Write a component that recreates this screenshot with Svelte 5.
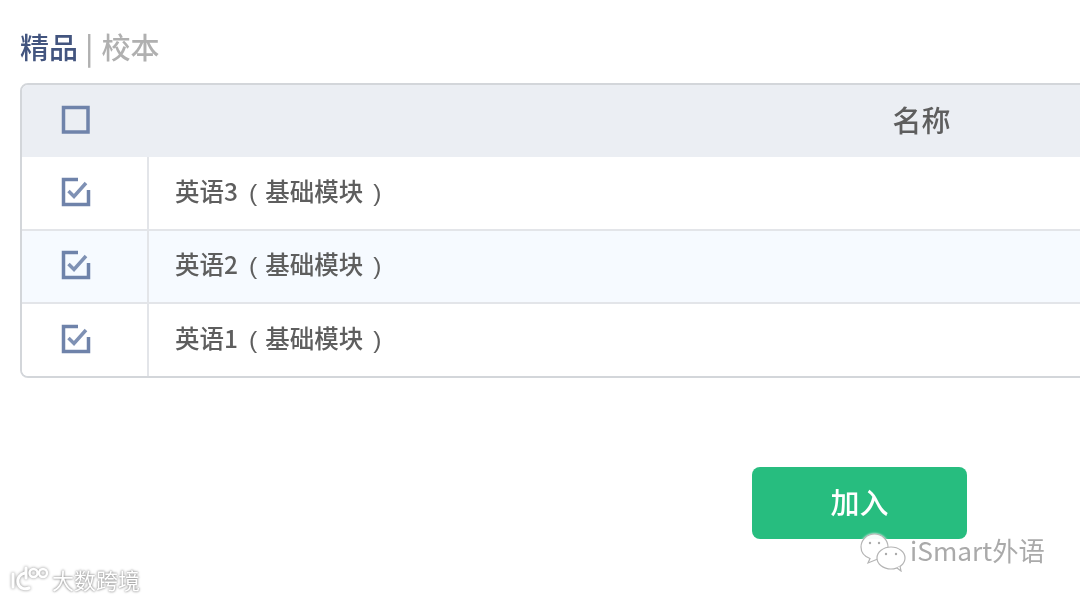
<script>
  const rows = [
    { label: '英语3', alt: false },
    { label: '英语2', alt: true },
    { label: '英语1', alt: false }
  ];
</script>

<div class="page">
  <div class="title"><span class="on">精品</span><span class="sep">|</span><span class="off">校本</span></div>

  <div class="table">
    <div class="row head">
      <div class="cell check">
        <svg width="30" height="30" viewBox="0 0 30 30"><rect x="2.500" y="2.500" width="24.500" height="24.500" fill="none" stroke="#6f83aa" stroke-width="3.500"/></svg>
      </div>
      <div class="cell name headname"><span>名称</span></div>
    </div>
    {#each rows as r, i}
      <div class="row" class:alt={r.alt} class:last={i === rows.length - 1}>
        <div class="cell check bordered">
          <svg width="30" height="30" viewBox="0 0 30 30">
            <path d="M17 2.500H2.500V27.500H27.500V13" fill="none" stroke="#6f83aa" stroke-width="3.500"/>
            <path d="M7.500 14L13 19.500L25 6" fill="none" stroke="#7f91b4" stroke-width="3.500"/>
          </svg>
        </div>
        <div class="cell name"><span>{r.label}<span class="paren left">(</span>基础模块<span class="paren right">)</span></span></div>
      </div>
    {/each}
  </div>

  <div class="actions"><button class="join"><span>加入</span></button></div>

  <div class="wm-left">
    <svg class="mark" width="44" height="28" viewBox="0 0 44 28">
      <g fill="none" stroke="#fff" stroke-width="3" stroke-linecap="round">
        <path d="M5 9V22"/>
        <path d="M17 8C12 9 9 13 10 18C11 23 16 25 21 23"/>
        <path d="M18 3V13"/>
      </g>
      <g fill="none" stroke="#fff" stroke-width="2.400">
        <circle cx="25.500" cy="8" r="4"/>
        <circle cx="35" cy="8" r="4"/>
      </g>
    </svg>
    <span>大数跨境</span>
  </div>
  <div class="wm-right">
    <svg class="chat" width="46" height="40" viewBox="0 0 46 40">
      <path d="M10 26.500C4.500 24.500 1 20 1 15C1 8 7 2 14.500 2C22 2 28 8 28 15C28 20 24.500 24.500 19 26.500L8 31Z" fill="#fff" fill-opacity="0.800" stroke="#b4b4b4" stroke-width="1.200"/>
      <ellipse cx="31" cy="26" rx="14" ry="11" fill="#fff" stroke="#b4b4b4" stroke-width="1.200"/>
      <path d="M37 36L41 39L40 34" fill="#fff" stroke="#b4b4b4" stroke-width="1.200"/>
      <circle cx="10" cy="11" r="1.200" fill="#aaa"/><circle cx="19" cy="11" r="1.200" fill="#aaa"/>
      <circle cx="26" cy="22" r="1.200" fill="#aaa"/><circle cx="36" cy="22" r="1.200" fill="#aaa"/>
    </svg>
    <span>iSmart外语</span>
  </div>
</div>

<style>
  :global(body) { margin: 0; background: #fff; }
  .page {
    position: relative;
    width: 1080px;
    height: 600px;
    overflow: hidden;
    padding: 26px 0 0 20px;
    box-sizing: border-box;
    font-family: "Noto Sans CJK SC", "Noto Sans", sans-serif;
    background: #fff;
    filter: blur(0.5px);
  }
  .title {
    display: flex;
    align-items: center;
    height: 40px;
    font-size: 29px;
    line-height: 40px;
    font-weight: 500;
  }
  .on { color: #43557f; }
  .sep { color: #b0b0b0; margin: 0 8px 0 7px; font-size: 30px; }
  .off { color: #b0b0b0; }
  .table {
    width: 1680px;
    margin-top: 17px;
    border: 2px solid #d3d6da;
    border-radius: 8px;
    box-sizing: border-box;
    overflow: hidden;
  }
  .row { display: flex; height: 73.500px; border-bottom: 2px solid #e3e5e9; box-sizing: border-box; background: #fff; }
  .row.last { border-bottom: 0; height: 72px; }
  .row.alt { background: #f6faff; }
  .row.head { background: #ebeef3; border-bottom: 0; height: 72px; }
  .cell { display: flex; align-items: center; }
  .check { width: 127px; flex: none; justify-content: flex-start; padding: 0 0 2px 39px; box-sizing: border-box; }
  .bordered { border-right: 2px solid #e3e5e9; }
  .name { flex: 1; padding: 0 0 5px 26px; font-size: 24.500px; color: #5e5e5e; font-weight: 500; }
  .paren { font-family: "Liberation Sans", sans-serif; }
  .paren.left { margin: 0 8px 0 11px; }
  .paren.right { margin-left: 10px; }
  .headname { justify-content: center; font-size: 29px; padding: 0 4px 5px 0; color: #5e5e5e; }
  .actions { display: flex; margin: 89px 0 0 732px; }
  .join {
    width: 215px;
    height: 72px;
    border: 0;
    border-radius: 8px;
    background: #27bd7f;
    color: #fff;
    font: inherit;
    font-size: 29px;
    font-weight: 500;
    padding: 0 0 5px 0;
  }
  .wm-left {
    position: absolute;
    left: 8px;
    top: 565px;
    display: flex;
    align-items: center;
    gap: 0;
    font-size: 22px;
    line-height: 28px;
    color: #fff;
    text-shadow: 0 0 2px #8a8a8a, 0 0 3px #a0a0a0;
  }
  .mark { filter: drop-shadow(0 0 1.500px #8a8a8a); }
  .wm-right {
    position: absolute;
    left: 860px;
    top: 530px;
    display: flex;
    align-items: center;
    gap: 4px;
    font-size: 26.300px;
    line-height: 40px;
    color: #aaa;
    text-shadow: 0 0 2px #fff;
  }
  .wm-right span { padding-bottom: 4px; }
  .chat { filter: drop-shadow(0 0 1px #fff); }
</style>
